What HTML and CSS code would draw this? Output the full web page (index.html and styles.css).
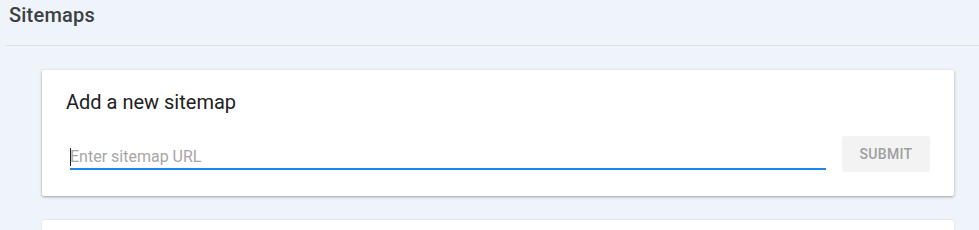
FILE: index.html
```html
<!DOCTYPE html>
<html lang="en">
<head>
  <meta charset="UTF-8">
  <meta name="viewport" content="width=device-width, initial-scale=1.0">
  <title>Sitemaps</title>
  <link rel="stylesheet" href="styles.css">
</head>
<body>
  <header class="page-header">
    <h1>Sitemaps</h1>
  </header>

  <main class="content">
    <section class="card">
      <h2>Add a new sitemap</h2>
      <form class="add-form">
        <div class="field">
          <span class="caret"></span>
          <input type="text" placeholder="Enter sitemap URL">
        </div>
        <button type="button" class="submit" disabled>Submit</button>
      </form>
    </section>

    <section class="card card-list"></section>
  </main>
</body>
</html>
```

FILE: styles.css
```css
/* page basics */
body {
  margin: 0;
  background: #eff4fb;
  font-family: Roboto, "Open Sans", Arial, sans-serif;
  color: #202124;
  overflow: hidden;
}

.page-header {
  height: 45px;
  margin-left: 5px;
  border-bottom: 1px solid #dcdfe3;

  & h1 {
    margin: 0;
    padding: 3px 0 0 4px;
    font-family: Roboto, sans-serif;
    font-size: 20px;
    font-weight: 500;
    letter-spacing: 0.2px;
    color: #3c4043;
  }
}

.content {
  display: flex;
  flex-direction: column;
  gap: 24px;
  padding: 24px 25px 0 42px;
}

/* cards */
.card {
  background: #fff;
  border-radius: 2px;
  box-shadow: 0 1px 3px rgba(0, 0, 0, 0.35);
  padding: 20px 24px 24px;
  height: 126px;
  box-sizing: border-box;

  & h2 {
    margin: 0;
    font-size: 20px;
    font-weight: 400;
    line-height: 24px;
    color: #202124;
  }
}

.card-list {
  height: 60px;
  box-shadow: 0 0 2px rgba(0, 0, 0, 0.15);
}

/* add sitemap form */
.add-form {
  display: flex;
  align-items: flex-end;
  gap: 16px;
  margin-top: 22px;
}

.field {
  position: relative;
  flex: 1;
  margin-left: 4px;
  margin-bottom: 2px;

  & input {
    display: block;
    width: 100%;
    box-sizing: border-box;
    border: none;
    border-bottom: 2px solid #1a88ee;
    outline: none;
    padding: 5px 0 1px;
    height: 30px;
    font-family: Roboto, sans-serif;
    font-size: 16px;
    color: #202124;
    background: transparent;
  }

  & input::placeholder {
    color: #a6a6a6;
  }
}

/* fake text cursor sitting over the input */
.caret {
  position: absolute;
  left: 0;
  top: 8px;
  width: 1px;
  height: 18px;
  background: #202124;
}

.submit {
  width: 88px;
  height: 36px;
  border: none;
  border-radius: 3px;
  background: #f3f3f3;
  color: #9e9e9e;
  font-family: Roboto, sans-serif;
  font-size: 14px;
  font-weight: 500;
  text-transform: uppercase;
  letter-spacing: 0.3px;
}
```
